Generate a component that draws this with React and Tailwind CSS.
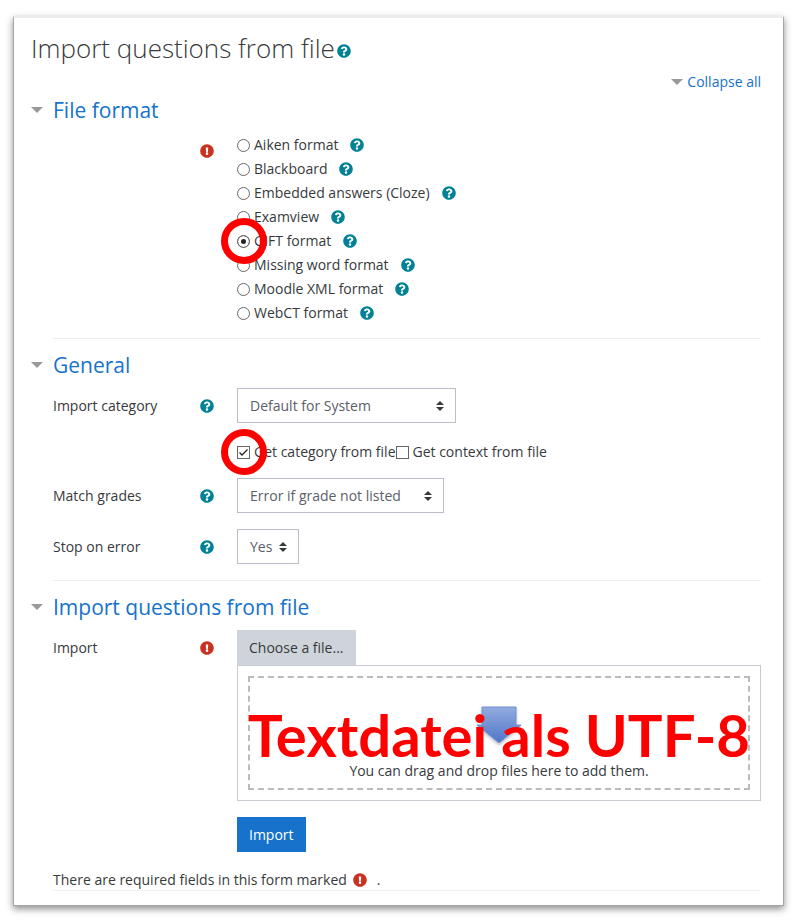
import React, { useState } from 'react';
import { FaQuestionCircle, FaExclamationCircle } from 'react-icons/fa';

const formats = [
  { id: 'aiken', label: 'Aiken format' },
  { id: 'blackboard', label: 'Blackboard' },
  { id: 'cloze', label: 'Embedded answers (Cloze)' },
  { id: 'examview', label: 'Examview' },
  { id: 'gift', label: 'GIFT format' },
  { id: 'missingword', label: 'Missing word format' },
  { id: 'xml', label: 'Moodle XML format' },
  { id: 'webct', label: 'WebCT format' }
];

function HelpButton({ topic }) {
  return (
    <button type="button" aria-label={`Help with ${topic}`} className="shrink-0 text-[#008196]">
      <FaQuestionCircle className="size-3.5" />
    </button>
  );
}

function Required() {
  return <FaExclamationCircle role="img" aria-label="Required" className="size-3.5 shrink-0 text-[#ca3120]" />;
}

function Caret() {
  return (
    <svg viewBox="0 0 12 6" className="h-[6px] w-3 shrink-0" fill="#999" aria-hidden="true">
      <path d="M0 0h12L6 6z" />
    </svg>
  );
}

// Red circle drawn over a control to point it out
function Ring() {
  return (
    <span className="pointer-events-none absolute top-1/2 left-1/2 z-10 size-[46px] -translate-1/2 rounded-full border-7 border-[#ff0000]" />
  );
}

function Section({ title, last, children }) {
  const [open, setOpen] = useState(true);

  return (
    <section className={last ? '' : 'mb-2.5'}>
      <h2 className="mb-[7px] text-[21px] leading-8 text-[#1672cb]">
        <button type="button" aria-expanded={open} onClick={() => setOpen(!open)} className="flex items-center gap-2.5">
          <Caret />
          {title}
        </button>
      </h2>
      {open && <div className="pl-[22px]">{children}</div>}
      {!last && <hr className="ml-[22px] border-[#eceef0]" />}
    </section>
  );
}

function Row({ label, htmlFor, icon, children }) {
  return (
    <div className="flex items-start">
      <div className="flex h-[35px] w-[184px] shrink-0 items-center justify-between pr-[23px]">
        {label ? <label htmlFor={htmlFor}>{label}</label> : <span />}
        {icon}
      </div>
      <div className="min-w-0 flex-1">{children}</div>
    </div>
  );
}

function Select({ id, width, options }) {
  return (
    <div className={`relative ${width}`}>
      <select
        id={id}
        className="block h-[35px] w-full appearance-none border border-[#b9bec8] bg-white pl-3 text-[#5a6067]"
      >
        {options.map(option => (
          <option key={option}>{option}</option>
        ))}
      </select>
      <svg
        viewBox="0 0 8 10"
        className="pointer-events-none absolute top-[13px] right-3 h-2.5 w-2"
        fill="#373a3c"
        aria-hidden="true"
      >
        <path d="M4 0l4 4H0zM4 10L0 6h8z" />
      </svg>
    </div>
  );
}

function Checkbox({ id, label, checked, onChange, marked }) {
  return (
    <div className="flex items-center gap-1">
      <span className="relative flex">
        <input
          id={id}
          type="checkbox"
          checked={checked}
          onChange={onChange}
          className="size-[13px] appearance-none border border-[#666] bg-white"
        />
        {checked && (
          <svg viewBox="0 0 13 13" className="pointer-events-none absolute inset-0 size-[13px]" fill="none" stroke="#222" strokeWidth="1.3">
            <path d="M2.5 6.5l2.5 2.5 5.5-5.5" />
          </svg>
        )}
        {marked && <Ring />}
      </span>
      <label htmlFor={id}>{label}</label>
    </div>
  );
}

function DropArrow() {
  return (
    <svg viewBox="0 0 46 42" className="h-[42px] w-[46px]" aria-hidden="true">
      <defs>
        <linearGradient id="arrowFill" x1="0" y1="0" x2="0" y2="1">
          <stop offset="0" stopColor="#93abdf" />
          <stop offset="1" stopColor="#5076c8" />
        </linearGradient>
        <filter id="arrowShadow" x="-20%" y="-20%" width="140%" height="150%">
          <feDropShadow dx="0" dy="2" stdDeviation="1.5" floodColor="#000" floodOpacity="0.25" />
        </filter>
      </defs>
      <path
        d="M6 1h34v18h5L23 37 1 19h5z"
        fill="url(#arrowFill)"
        stroke="#6f90d4"
        filter="url(#arrowShadow)"
      />
    </svg>
  );
}

export default function App() {
  const [format, setFormat] = useState('gift');
  const [fromFile, setFromFile] = useState({ category: true, context: false });

  const toggle = (key) => {
    setFromFile(prev => ({ ...prev, [key]: !prev[key] }));
  };

  return (
    <div className="min-h-screen bg-white pt-4 pr-[19px] pb-4 pl-[13px] font-['Open_Sans','Noto_Sans',sans-serif] text-sm leading-5 text-[#373a3c]">
      <main className="border border-t-2 border-[#a5a5a5] border-t-[#ececec] bg-white pt-3 pr-[22px] pb-3.5 pl-[17px] shadow-[0_3px_7px_rgba(0,0,0,0.45)]">
        <h1 className="flex items-center text-[26px] leading-9 font-light">
          Import questions from file
          <span className="ml-0.5 flex pt-1.5">
            <HelpButton topic="importing questions" />
          </span>
        </h1>

        <div className="mt-1.5 mb-0.5 flex justify-end">
          <a href="#collapse" className="flex items-center gap-1 text-[#1672cb]">
            <Caret />
            Collapse all
          </a>
        </div>

        <form onSubmit={e => e.preventDefault()}>
          <Section title="File format">
            <Row icon={<Required />}>
              <div role="radiogroup" aria-label="File format" className="pb-[13px]">
                {formats.map(item => (
                  <div key={item.id} className="flex h-6 items-center">
                    <span className="relative mr-1 flex">
                      <input
                        id={item.id}
                        type="radio"
                        name="format"
                        checked={format === item.id}
                        onChange={() => setFormat(item.id)}
                        className="size-[13px] appearance-none rounded-full border border-[#666] bg-white checked:bg-[#222] checked:shadow-[inset_0_0_0_3px_white]"
                      />
                      {item.id === 'gift' && <Ring />}
                    </span>
                    <label htmlFor={item.id} className="mr-3">{item.label}</label>
                    <HelpButton topic={item.label} />
                  </div>
                ))}
              </div>
            </Row>
          </Section>

          <Section title="General">
            <div className="space-y-4 pb-4">
              <Row label="Import category" htmlFor="category" icon={<HelpButton topic="Import category" />}>
                <Select id="category" width="w-[219px]" options={['Default for System']} />
                <div className="mt-[19px] flex">
                  <Checkbox
                    id="catfromfile"
                    label="Get category from file"
                    checked={fromFile.category}
                    onChange={() => toggle('category')}
                    marked
                  />
                  <Checkbox
                    id="contextfromfile"
                    label="Get context from file"
                    checked={fromFile.context}
                    onChange={() => toggle('context')}
                  />
                </div>
              </Row>
              <Row label="Match grades" htmlFor="grades" icon={<HelpButton topic="Match grades" />}>
                <Select id="grades" width="w-[207px]" options={['Error if grade not listed', 'Nearest grade if not listed']} />
              </Row>
              <Row label="Stop on error" htmlFor="stop" icon={<HelpButton topic="Stop on error" />}>
                <Select id="stop" width="w-[62px]" options={['Yes', 'No']} />
              </Row>
            </div>
          </Section>

          <Section title="Import questions from file" last>
            <Row label="Import" htmlFor="choose" icon={<Required />}>
              <button id="choose" type="button" className="block h-[35px] bg-[#ced4da] px-3">
                Choose a file...
              </button>
              <div className="relative border border-[#c8ccd2] p-2.5">
                <div className="flex flex-col items-center border-2 border-dashed border-[#bbb] pt-7 pb-[7px]">
                  <DropArrow />
                  <p className="mt-[13px]">You can drag and drop files here to add them.</p>
                </div>
                <p className="absolute inset-x-0 top-[45px] text-center text-[58px] leading-12 font-bold whitespace-nowrap text-[#ff0000] font-['Lato','Open_Sans',sans-serif]">
                  Textdatei als UTF-8
                </p>
              </div>
              <button type="submit" className="mt-4 block h-[35px] bg-[#1672cb] px-3 text-white">
                Import
              </button>
            </Row>
            <p className="mt-[18px] flex items-center border-b border-[#f0f0f0]">
              There are required fields in this form marked
              <span className="mr-2.5 ml-1.5">
                <Required />
              </span>
              .
            </p>
          </Section>
        </form>
      </main>
    </div>
  );
}
